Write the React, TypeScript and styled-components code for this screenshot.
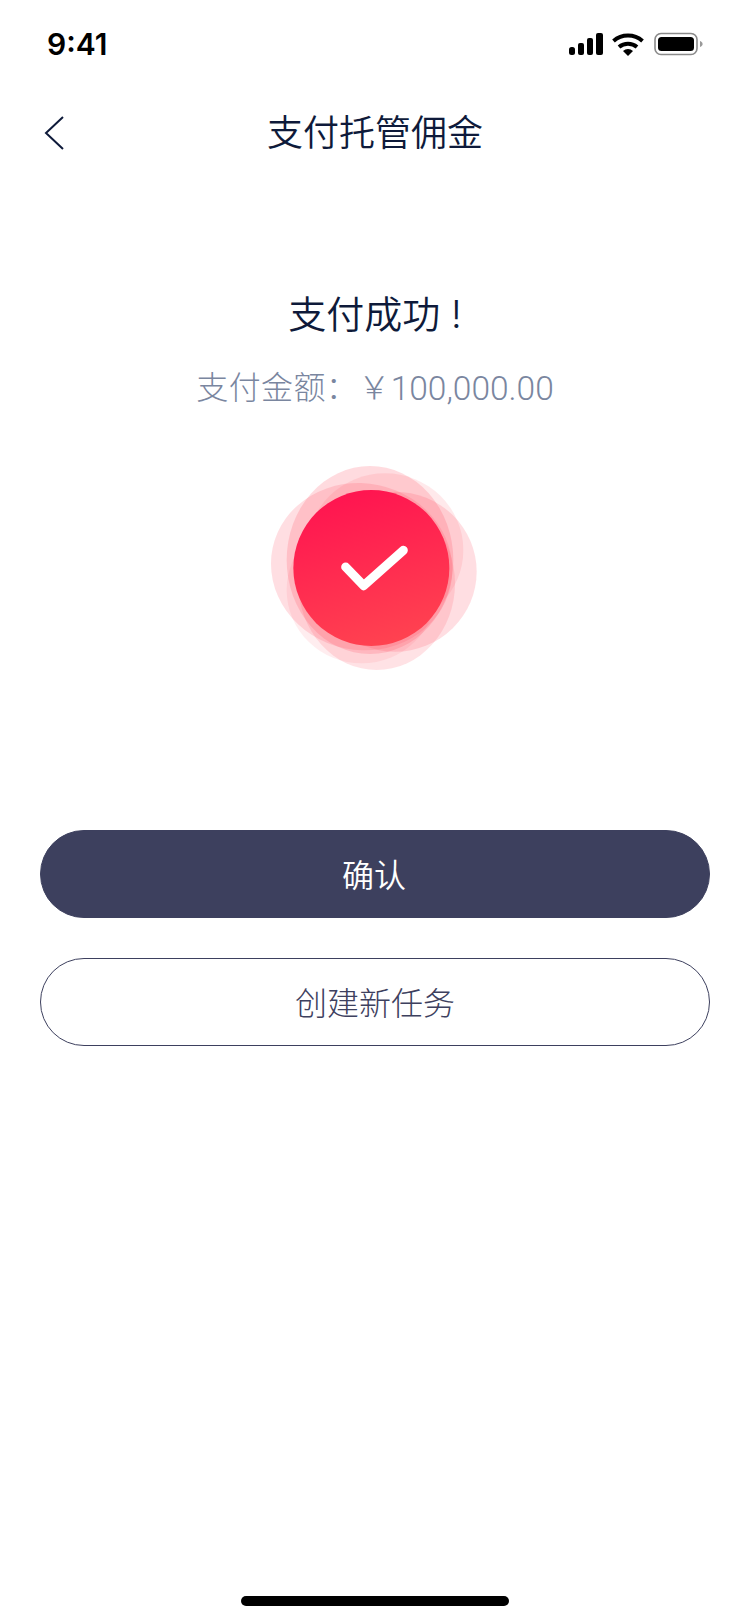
import React from "react";
import styled, { createGlobalStyle } from "styled-components";

const Global = createGlobalStyle`
  html, body { margin: 0; padding: 0; background: #fff; }
  * { box-sizing: border-box; }
`;
const Page = styled.div`
  width: 750px; height: 1624px; display: flex; flex-direction: column; background: #fff;
  font-family: "Noto Sans CJK SC", "Noto Sans", sans-serif; overflow: hidden;
`;
const StatusBar = styled.div`
  height: 88px; padding: 0 45px 0 47px; display: flex; align-items: center; justify-content: space-between;
`;
const Time = styled.span`
  font-family: Inter, "Liberation Sans", sans-serif; font-size: 30px; font-weight: 600; color: #000; line-height: 1;
`;
const StatusIcons = styled.svg`display: block;`;
const NavBar = styled.div`
  height: 90px; padding-bottom: 4px; display: flex; align-items: center; justify-content: center; position: relative;
`;
const BackIcon = styled.svg`position: absolute; left: 44px; top: 28px;`;
const NavTitle = styled.h1`
  margin: 0; font-size: 36px; font-weight: 350; color: #0e1a3a; line-height: 1.2;
`;
const Result = styled.section`
  padding-top: 114px; display: flex; flex-direction: column; align-items: center;
`;
const ResultTitle = styled.h2`
  margin: 0; font-family: Inter, "Noto Sans CJK SC", sans-serif; font-size: 38px; font-weight: 350; color: #0e1a3a; line-height: 44px;
`;
const Amount = styled.p`
  margin: 30px 0 0; font-family: Roboto, "Noto Sans CJK SC", sans-serif; font-size: 32px; font-weight: 300; letter-spacing: 0.4px; color: #7a869f; line-height: 44px;
`;
const Figure = styled.span`
  font-size: 33.5px; font-weight: 300; letter-spacing: 0; vertical-align: -1px;
`;
const Seal = styled.svg`display: block; margin-top: 39px;`;
const Actions = styled.div`
  margin-top: 150px; padding: 0 40px; display: flex; flex-direction: column; gap: 40px;
`;
const Pill = styled.button<{ $filled?: boolean }>`
  height: 88px; width: 100%; border-radius: 44px; font-family: inherit; font-size: 32px; padding: 0 ${(p) => (p.$filled ? "2px" : "0")} 2px 0;
  font-weight: ${(p) => (p.$filled ? 350 : 300)};
  border: 1px solid #3d405e;
  background: ${(p) => (p.$filled ? "#3d405e" : "#fff")};
  color: ${(p) => (p.$filled ? "#fff" : "#3d405e")};
`;
const HomeBar = styled.div`
  margin: auto auto 18px; width: 268px; height: 10px; border-radius: 5px; background: #000;
`;

export default function App() {
  return (
    <Page>
      <Global />
      <StatusBar>
        <Time>9:41</Time>
        <StatusIcons width="136" height="24" viewBox="0 0 136 24">
          <rect x="0" y="15" width="6" height="8" rx="2.5" fill="#000" />
          <rect x="9" y="11" width="6" height="12" rx="2" fill="#000" />
          <rect x="18" y="6" width="6" height="17" rx="2" fill="#000" />
          <rect x="27" y="1" width="7" height="22" rx="2" fill="#000" />
          <path d="M44.5 9a22 22 0 0 1 29 0M50 15a14 14 0 0 1 18 0" stroke="#000" strokeWidth="4" fill="none" />
          <path d="M54 19a7.5 7.5 0 0 1 10 0L59 24Z" fill="#000" />
          <rect x="86" y="1.5" width="42" height="21" rx="6" fill="none" stroke="#8a8a8a" strokeWidth="1.6" />
          <rect x="89" y="5" width="36" height="14" rx="3.5" fill="#000" />
          <path d="M131 9c1.6.6 2.6 1.7 2.6 3s-1 2.4-2.6 3Z" fill="#9a9a9a" />
        </StatusIcons>
      </StatusBar>
      <NavBar>
        <BackIcon width="20" height="34" viewBox="0 0 20 34">
          <path d="M19 1 2 17l17 16" fill="none" stroke="#0e1a3a" strokeWidth="2" />
        </BackIcon>
        <NavTitle>支付托管佣金</NavTitle>
      </NavBar>
      <Result>
        <ResultTitle>支付成功 !</ResultTitle>
        <Amount>支付金额：￥<Figure>100,000.00</Figure></Amount>
        <Seal width="240" height="230" viewBox="0 0 720 690">
          <defs>
            <linearGradient id="seal" x1="0.36" y1="0" x2="0.64" y2="1">
              <stop offset="0" stopColor="#ff1450" />
              <stop offset="1" stopColor="#ff4350" />
            </linearGradient>
          </defs>
          <ellipse cx="320" cy="350" rx="273" ry="250" fill="#ff4a5e" fillOpacity="0.18" transform="rotate(12 320 350)" />
          <ellipse cx="345" cy="330" rx="250" ry="282" fill="#ff4a5e" fillOpacity="0.2" />
          <ellipse cx="390" cy="300" rx="235" ry="230" fill="#ff4a5e" fillOpacity="0.12" />
          <ellipse cx="420" cy="365" rx="245" ry="240" fill="#ff4a5e" fillOpacity="0.18" />
          <ellipse cx="320" cy="420" rx="225" ry="220" fill="#ff4a5e" fillOpacity="0.1" />
          <ellipse cx="365" cy="400" rx="235" ry="260" fill="#ff4a5e" fillOpacity="0.16" />
          <circle cx="349" cy="354" r="234" fill="url(#seal)" />
          <path d="M272 351 326 407 445 301" fill="none" stroke="#fff" strokeWidth="27" strokeLinecap="round" strokeLinejoin="round" />
        </Seal>
      </Result>
      <Actions>
        <Pill $filled>确认</Pill>
        <Pill>创建新任务</Pill>
      </Actions>
      <HomeBar />
    </Page>
  );
}
